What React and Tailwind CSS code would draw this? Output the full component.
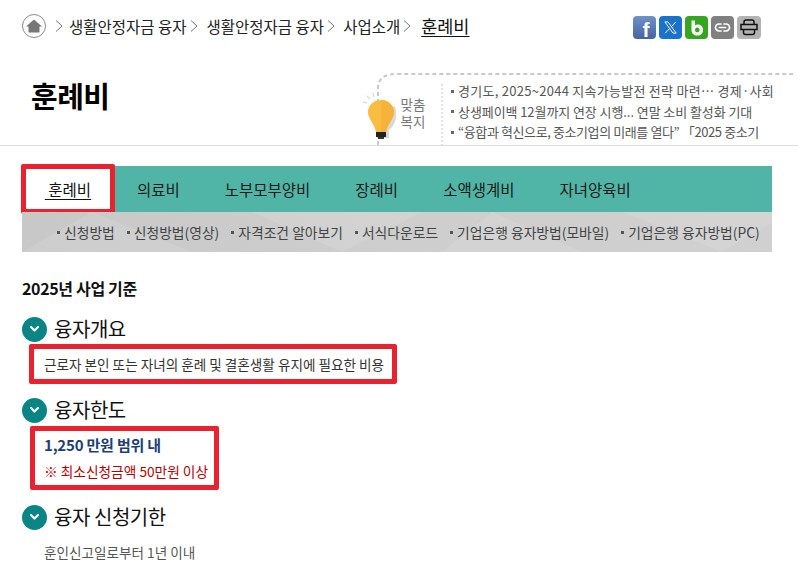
import React from "react";

const Sep = () => (
  <svg width="8" height="14" viewBox="0 0 8 14" className="mx-[3px] shrink-0" fill="none" stroke="#777" strokeWidth="1">
    <path d="M1 1.5 L7 7 L1 12.5" />
  </svg>
);

const Bullet = ({ c = "bg-[#666]" }) => <span className={`w-[3px] h-[3px] mr-[4px] shrink-0 ${c}`} />;

const Chevron = () => (
  <span className="w-[25px] h-[25px] rounded-full bg-[#0a8585] flex items-center justify-center shrink-0">
    <svg width="11" height="8" viewBox="0 0 11 8" fill="none" stroke="#fff" strokeWidth="2.2" strokeLinecap="round" strokeLinejoin="round">
      <path d="M2 2 L5.5 5.5 L9 2" />
    </svg>
  </span>
);

const Heading = ({ children, className = "" }) => (
  <div className={`flex items-center gap-[7px] h-[26px] ${className}`}>
    <Chevron />
    <span className="text-[20px] leading-[26px] text-[#111] tracking-[-0.45px]">{children}</span>
  </div>
);

const Social = ({ className, children }) => (
  <span className={`h-[23px] rounded-[4px] flex items-center justify-center overflow-hidden ${className}`}>{children}</span>
);

const subs = [
  ["신청방법", "mr-[12px]"],
  ["신청방법(영상)", "mr-[12px]"],
  ["자격조건 알아보기", "mr-[12px]"],
  ["서식다운로드", "mr-[12px]"],
  ["기업은행 융자방법(모바일)", "mr-[12px]"],
  ["기업은행 융자방법(PC)", ""],
];

const tabs = ["의료비", "노부모부양비", "장례비", "소액생계비", "자녀양육비"];

export default function App() {
  return (
    <div
      className="w-[798px] h-[578px] overflow-hidden bg-white text-[#222]"
      style={{ fontFamily: '"Noto Sans CJK KR", "Noto Sans", sans-serif' }}
    >
      {/* breadcrumb */}
      <div className="h-[52px] pl-[22px] pr-[37px] flex items-center justify-between">
        <div className="flex items-center text-[15.5px] leading-[20px] text-[#222]">
          <span className="w-[24px] h-[24px] rounded-full border border-[#8a8a8a] flex items-center justify-center mr-[6px]">
            <svg width="16" height="14" viewBox="0 0 16 14" fill="#777">
              <path d="M8 0.5 L16 7.5 H13.5 V13.5 H2.5 V7.5 H0 Z" />
            </svg>
          </span>
          <Sep />
          <span className="ml-[3px]">생활안정자금 융자</span>
          <Sep />
          <span className="ml-[6px]">생활안정자금 융자</span>
          <Sep />
          <span className="ml-[5px]">사업소개</span>
          <Sep />
          <span className="ml-[7px] text-[17.5px] underline underline-offset-[3px] text-[#111]">훈례비</span>
        </div>
        <div className="flex items-center gap-[3px] mt-[3px]">
          <Social className="w-[23px] bg-gradient-to-b from-[#6f92c8] to-[#47649f]">
            <span className="text-white font-bold text-[21px] leading-[23px] mt-[3px] ml-[3px]" style={{ fontFamily: '"Liberation Sans", sans-serif' }}>f</span>
          </Social>
          <Social className="w-[23px] bg-[#1a73c9]">
            <svg width="15" height="15" viewBox="0 0 24 24" fill="none" stroke="#fff" strokeWidth="1.5">
              <path d="M3 3 H8 L21 21 H16 Z" />
              <path d="M20.5 3 L13.5 10.8 M10.3 13.8 L3.5 21" />
            </svg>
          </Social>
          <Social className="w-[23px] bg-[#34a61f]">
            <svg width="14" height="16" viewBox="0 0 14 16" fill="#fff">
              <path fillRule="evenodd" d="M1.5 0.5 H5 V5.2 C5.8 4.7 6.8 4.4 8 4.4 C11 4.4 13 6.7 13 9.9 C13 13.2 10.9 15.5 7.5 15.5 C3.9 15.5 1.5 13.4 1.5 9.9 Z M7.3 7.6 C6 7.6 5 8.5 5 10 C5 11.4 6 12.3 7.3 12.3 C8.6 12.3 9.5 11.4 9.5 10 C9.5 8.5 8.6 7.6 7.3 7.6 Z" />
            </svg>
          </Social>
          <Social className="w-[23px] bg-[#808080]">
            <svg width="17" height="11" viewBox="0 0 17 11" fill="none" stroke="#fff" strokeWidth="1.7" strokeLinecap="round">
              <path d="M7 2 H5 A3.5 3.5 0 0 0 5 9 H7" />
              <path d="M10 2 H12 A3.5 3.5 0 0 1 12 9 H10" />
              <path d="M5.5 5.5 H11.5" />
            </svg>
          </Social>
          <Social className="w-[24px] bg-[#b3b3b3]">
            <svg width="18" height="17" viewBox="0 0 18 17" fill="none" stroke="#111" strokeWidth="1.5">
              <path d="M4 5 V3 A2 2 0 0 1 6 1 H12 A2 2 0 0 1 14 3 V5" />
              <path d="M1 5.5 H17 V10.5 H1 Z" />
              <path d="M3.5 10.5 V13.5 A2 2 0 0 0 5.5 15.5 H12.5 A2 2 0 0 0 14.5 13.5 V10.5" />
            </svg>
          </Social>
        </div>
      </div>

      {/* title row */}
      <div className="h-[94px] border-b border-[#dcdcdc] pl-[31px] flex justify-between relative">
        <h1 className="text-[29px] leading-[44px] font-bold text-black tracking-[-0.5px] mt-[21px]">훈례비</h1>
        <div className="w-[437px] h-[93px] relative flex">
          <svg className="absolute left-0 top-0" width="437" height="93" fill="none" stroke="#c9c9c9" strokeWidth="2" strokeDasharray="4 3">
            <path d="M17 93 V36 Q17 22 36 22 H432" />
            <path d="M81 32 V93" stroke="#d8d8d8" strokeWidth="1.5" strokeDasharray="2 2" />
          </svg>
          <svg className="absolute left-[2px] top-[40px]" width="40" height="50" viewBox="0 0 40 50">
            <path d="M4 4 L7 7 M10 1 L11 5 M0 10 L4 11" stroke="#ddd" strokeWidth="1.5" />
            <path d="M32 14 Q36 30 26 38 V46 H20 L28 16 Z" fill="#d8d8d8" />
            <path d="M18 8 C9 8 5 15 5 20 C5 27 11 31 13 40 H23 C25 31 31 27 31 20 C31 15 27 8 18 8 Z" fill="#fbbd41" />
            <path d="M18 8 C27 8 31 15 31 20 C31 27 25 31 23 40 H18 Z" fill="#f6b33a" />
            <rect x="13" y="40" width="10" height="5" fill="#222" />
            <rect x="15" y="45" width="6" height="2" fill="#333" />
          </svg>
          <div className="absolute left-[38px] top-[44px] w-[28px] text-[13.5px] leading-[17px] text-[#777] text-center">
            맞춤
            <br />
            복지
          </div>
          <div className="absolute left-[90px] top-[29px] text-[13px] leading-[20.5px] text-[#555] whitespace-nowrap">
            <div className="flex items-center tracking-[0.27px]"><Bullet />경기도, 2025~2044 지속가능발전 전략 마련… 경제·사회</div>
            <div className="flex items-center tracking-[-0.08px]"><Bullet />상생페이백 12월까지 연장 시행... 연말 소비 활성화 기대</div>
            <div className="flex items-center tracking-[-0.4px]"><Bullet />“융합과 혁신으로, 중소기업의 미래를 열다” 「2025 중소기</div>
          </div>
        </div>
      </div>

      {/* nav */}
      <div className="ml-[22px] w-[750px] mt-[20px]">
        <div className="h-[46px] bg-[#50b5a6] flex items-center gap-[45px] relative">
          <div className="absolute -left-[1px] -top-[2px] w-[94px] h-[50px] bg-white border-[5px] border-[#e8222e] rounded-[2px] flex items-center justify-center">
            <span className="text-[15.5px] leading-[20px] text-[#111] underline underline-offset-[3px]">&nbsp;훈례비</span>
          </div>
          <div className="w-[70px] shrink-0" />
          {tabs.map((t) => (
            <span key={t} className="shrink-0 text-center text-[15.5px] leading-[20px] text-[#1a1a1a]">{t}</span>
          ))}
        </div>
        <div className="h-[40px] bg-gradient-to-r from-[#c8c8c8] via-[#cecece] to-[#d0d0d0] flex items-center pl-[35px] relative overflow-hidden">
          <svg className="absolute inset-0" width="750" height="40" fill="#fff" fillOpacity="0.1">
            <path d="M0 40 L70 0 L170 40 Z" />
            <path d="M230 0 L320 40 L400 0 Z" />
            <path d="M420 40 L470 0 L560 40 Z" />
            <path d="M600 0 L700 40 L750 10 V0 Z" />
          </svg>
          {subs.map(([s, m]) => (
            <span key={s} className={`relative flex items-center text-[13.8px] leading-[18px] text-[#444] whitespace-nowrap ${m}`}>
              <Bullet c="bg-[#555]" />
              {s}
            </span>
          ))}
        </div>
      </div>

      {/* content */}
      <div className="pl-[22px] pt-[25px]">
        <h2 className="text-[16px] leading-[22px] font-bold text-[#111] tracking-[-0.35px]">2025년 사업 기준</h2>
        <Heading className="mt-[17px]">융자개요</Heading>
        <div className="ml-[7px] mt-[2px] w-[368px] h-[40px] border-[5px] border-[#e8222e] rounded-[2px] flex items-center pl-[10px] text-[13.6px] leading-[18px] text-[#333] whitespace-nowrap">
          근로자 본인 또는 자녀의 훈례 및 결혼생활 유지에 필요한 비용
        </div>
        <Heading className="mt-[13px]">융자한도</Heading>
        <div className="ml-[8px] mt-[3px] w-[189px] h-[64px] border-[5px] border-[#e8222e] rounded-[2px] pl-[9px] pt-[4px] whitespace-nowrap">
          <div className="text-[15px] leading-[20px] font-bold text-[#1d3f73] tracking-[-0.2px]">1,250 만원 범위 내</div>
          <div className="text-[13.7px] leading-[18px] text-[#b30000] mt-[7px]">※ 최소신청금액 50만원 이상</div>
        </div>
        <Heading className="mt-[14px]">융자 신청기한</Heading>
        <p className="ml-[22px] mt-[13px] text-[13.6px] leading-[18px] text-[#555]">훈인신고일로부터 1년 이내</p>
      </div>
    </div>
  );
}
